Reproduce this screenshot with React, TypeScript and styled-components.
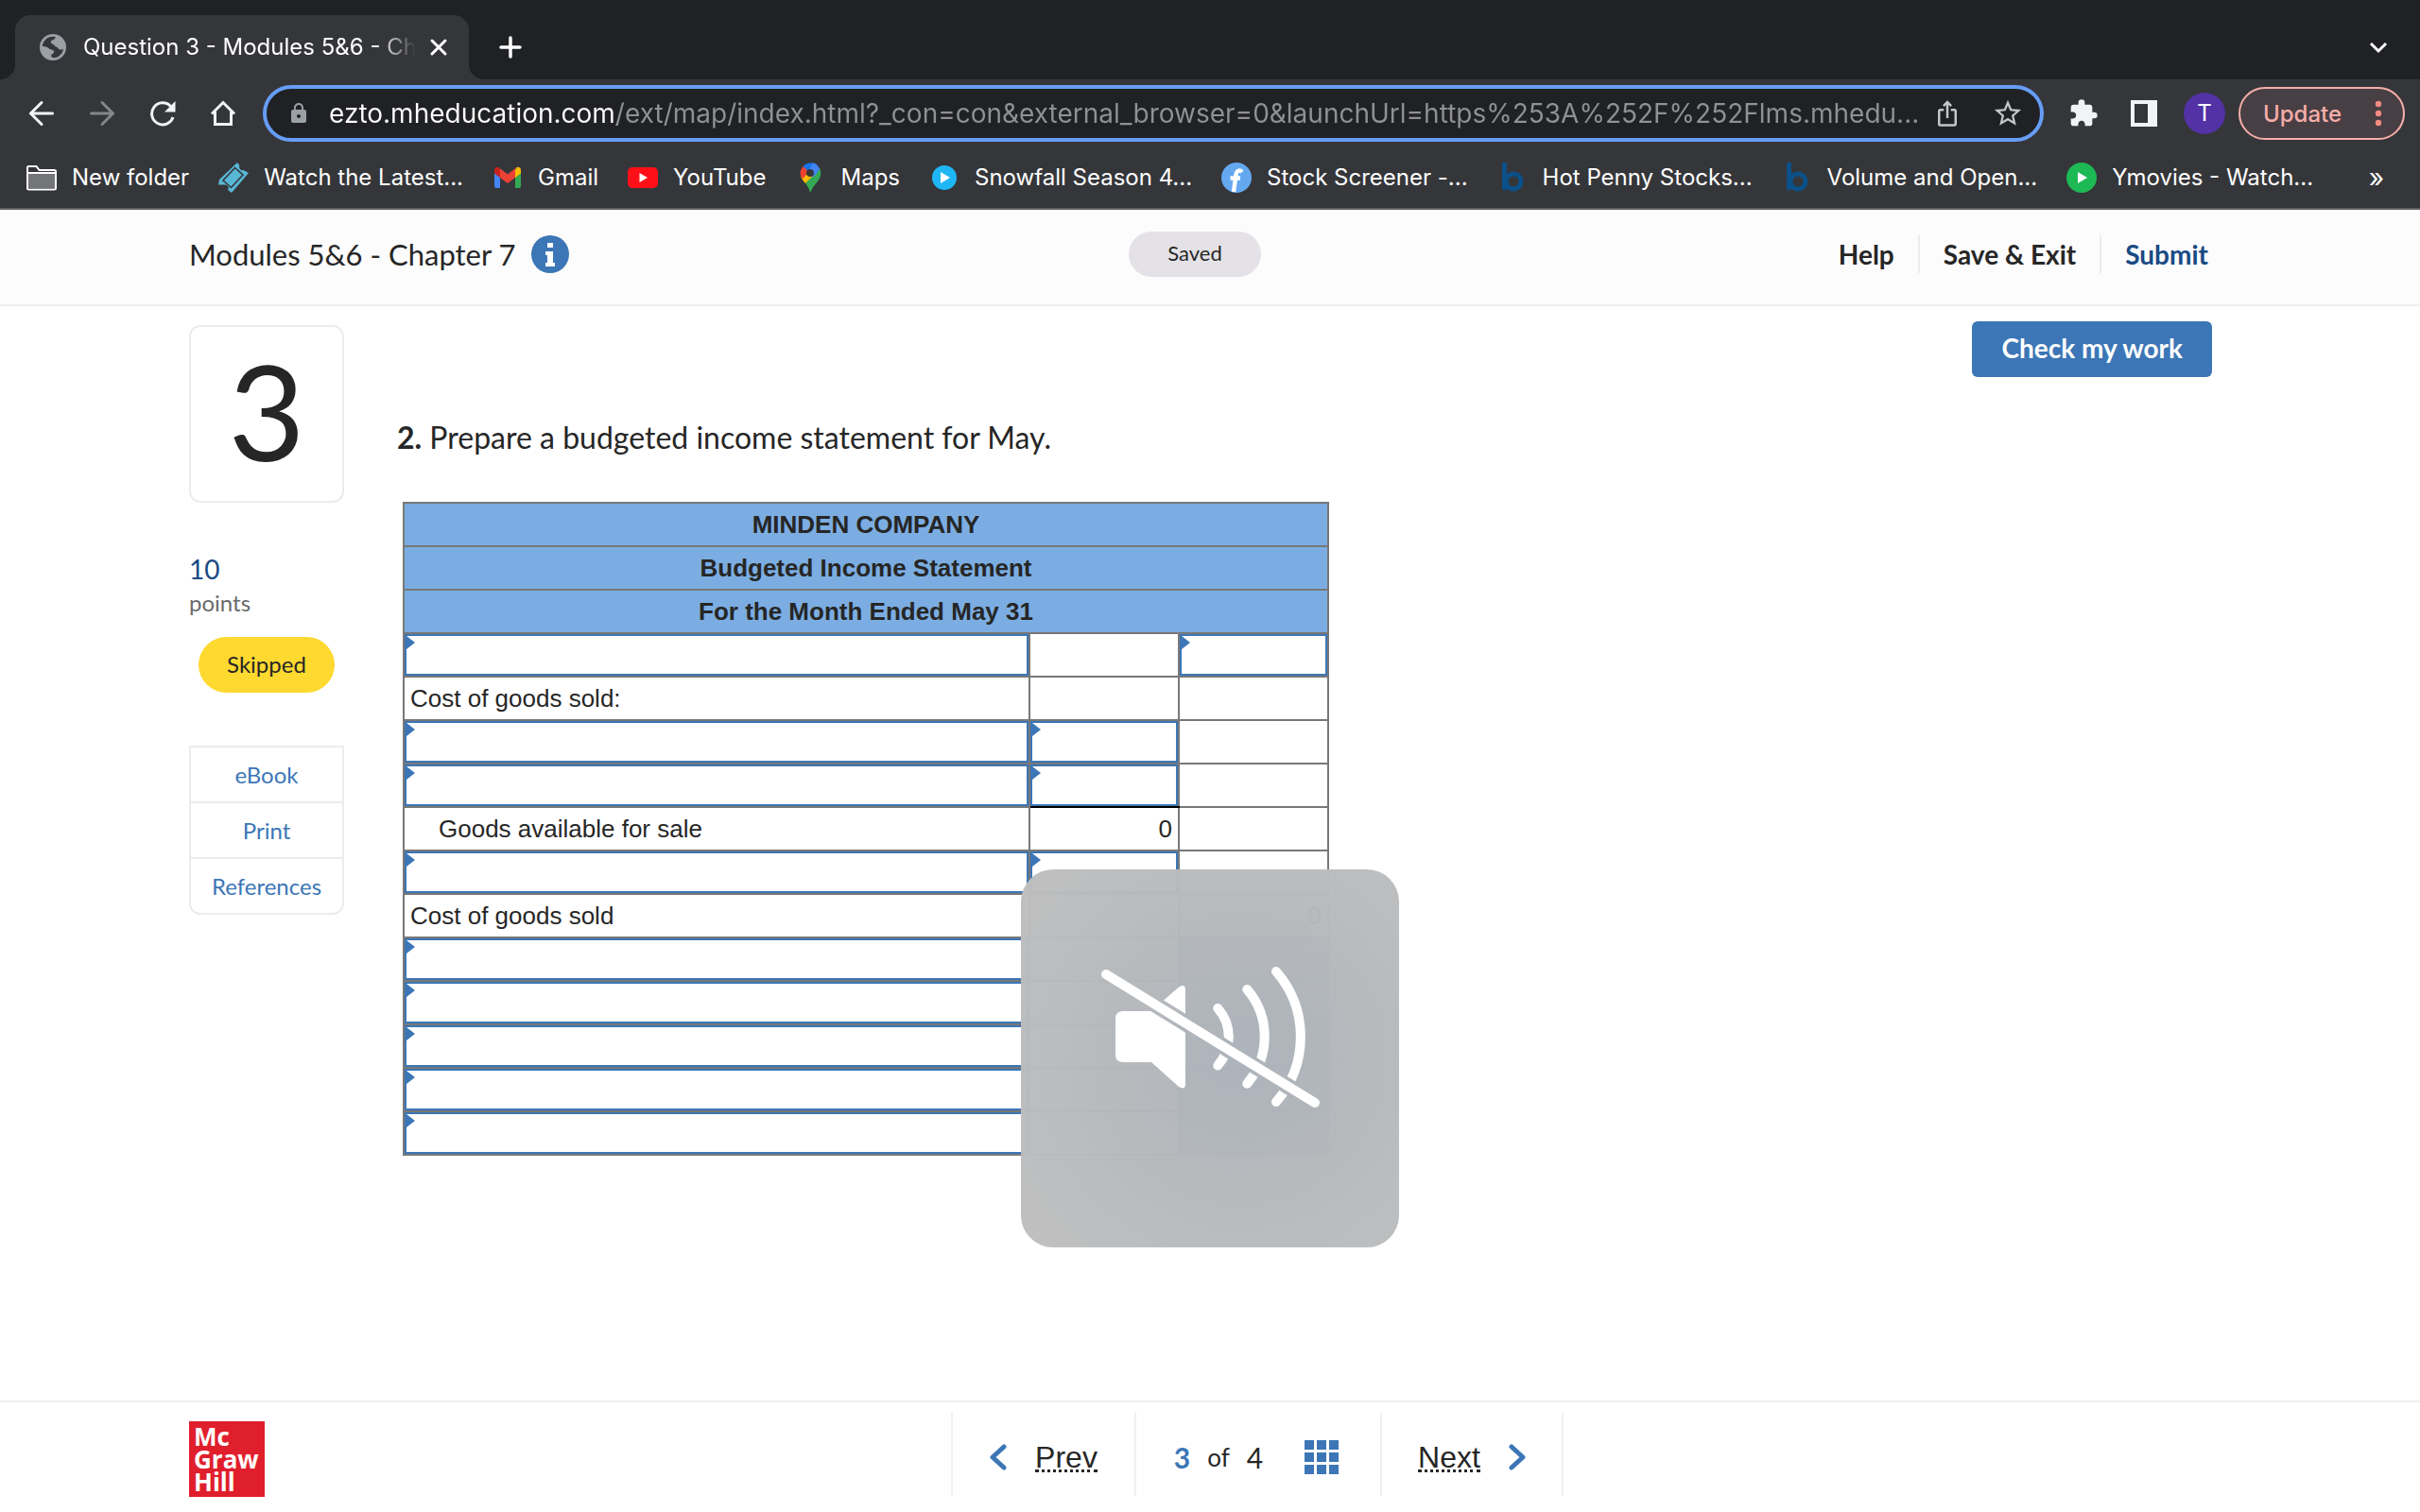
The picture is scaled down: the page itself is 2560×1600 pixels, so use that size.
import React from 'react';
import styled, { createGlobalStyle } from 'styled-components';
import { MdExtension, MdIosShare, MdLock, MdStarBorder } from 'react-icons/md';

const color = {
  strip: '#202124',
  toolbar: '#35363a',
  chromeText: '#ffffff',
  blue: '#3c76b6',
  navy: '#1a4a84',
  ink: '#262626',
  line: '#ececec',
  grid: '#787878',
};

const font = {
  chrome: '"Inter", "Roboto", sans-serif',
  page: '"Lato", "Open Sans", sans-serif',
  sheet: '"Liberation Sans", Arial, sans-serif',
};

const GlobalStyle = createGlobalStyle`
  * { box-sizing: border-box; }
  body { margin: 0; background: #fff; color: ${color.ink}; font-family: ${font.page}; }
  button, input { font: inherit; color: inherit; }
  button { border: 0; padding: 0; background: none; cursor: pointer; }
  a { text-decoration: none; color: inherit; }
  svg { display: block; }
`;

const Screen = styled.div`
  min-height: 100vh;
  display: flex;
  flex-direction: column;
`;

/* ---------- browser frame ---------- */

const Browser = styled.header`
  background: ${color.toolbar};
  color: ${color.chromeText};
  font-family: ${font.chrome};
  border-bottom: 2px solid #605f64;
`;

const TabStrip = styled.div`
  height: 84px;
  padding: 16px 32px 0 16px;
  display: flex;
  background: ${color.strip};
`;

const Tab = styled.div`
  position: relative;
  width: 480px;
  padding: 0 20px 0 26px;
  display: flex;
  align-items: center;
  background: ${color.toolbar};
  border-radius: 16px 16px 0 0;

  &::before, &::after {
    content: '';
    position: absolute;
    bottom: 0;
    width: 16px;
    height: 16px;
  }
  &::before {
    right: 100%;
    background: radial-gradient(circle at 0 0, transparent 16px, ${color.toolbar} 16px);
  }
  &::after {
    left: 100%;
    background: radial-gradient(circle at 100% 0, transparent 16px, ${color.toolbar} 16px);
  }
`;

const TabTitle = styled.span`
  flex: 1;
  margin: 0 12px 0 18px;
  overflow: hidden;
  white-space: nowrap;
  font-size: 24px;
  line-height: 32px;
  mask-image: linear-gradient(to right, #000 calc(100% - 40px), transparent);
`;

const StripButton = styled.button<{ $end?: boolean }>`
  display: flex;
  align-items: center;
  justify-content: center;
  margin-left: ${p => (p.$end ? 'auto' : '32px')};
`;

const Toolbar = styled.div`
  padding: 6px 16px 6px 12px;
  display: flex;
  align-items: center;
`;

const IconButton = styled.button<{ $dim?: boolean }>`
  width: 64px;
  height: 60px;
  display: flex;
  flex: none;
  align-items: center;
  justify-content: center;
  color: ${p => (p.$dim ? '#85868a' : '#f1f3f4')};
`;

const Omnibox = styled.div`
  flex: 1;
  height: 60px;
  margin: 0 10px;
  padding: 0 2px 0 22px;
  display: flex;
  align-items: center;
  background: ${color.strip};
  border: 4px solid #669df6;
  border-radius: 30px;
  color: #c4c6c9;
`;

const Address = styled.input`
  flex: 1;
  min-width: 0;
  height: 48px;
  margin-left: 20px;
  padding: 0;
  border: 0;
  outline: 0;
  font-size: 28px;
  line-height: 48px;
  color: transparent;
  background: linear-gradient(to right, #fff 304px, #8f9194 304px);
  background-clip: text;
  -webkit-background-clip: text;
`;

const OmniButton = styled.button`
  width: 64px;
  height: 52px;
  display: flex;
  flex: none;
  align-items: center;
  justify-content: center;
`;

const Avatar = styled.span`
  width: 44px;
  height: 44px;
  border-radius: 50%;
  background: #5232a5;
  color: #fff;
  font-size: 24px;
  line-height: 44px;
  text-align: center;
`;

const UpdateButton = styled.button`
  width: 176px;
  height: 56px;
  margin-left: 4px;
  padding: 0 22px 0 24px;
  display: flex;
  align-items: center;
  justify-content: space-between;
  border: 2px solid #f6aea9;
  border-radius: 28px;
  background: #483f44;
  color: #f6aea9;
  font-size: 24px;
  font-weight: 500;
`;

const Bookmarks = styled.nav`
  height: 64px;
  padding: 0 38px 0 28px;
  display: flex;
  align-items: center;
  gap: 31px;
`;

const Bookmark = styled.a`
  display: flex;
  align-items: center;
  gap: 16px;
  font-size: 24px;
  line-height: 32px;
  white-space: nowrap;
`;

const More = styled.button`
  margin-left: auto;
  font-size: 28px;
  line-height: 32px;
`;

/* ---------- assignment page ---------- */

const PageHeader = styled.header`
  height: 102px;
  padding: 0 232px 6px 200px;
  display: grid;
  grid-template-columns: 1fr auto 1fr;
  align-items: center;
  background: #fcfcfc;
  border-bottom: 2px solid #eeeeee;
`;

const Title = styled.h1`
  margin: 0;
  display: flex;
  align-items: center;
  gap: 16px;
  font-size: 31px;
  line-height: 40px;
  font-weight: 400;
`;

const Saved = styled.span`
  width: 140px;
  height: 48px;
  border-radius: 24px;
  background: #e4e2e6;
  font-size: 22px;
  line-height: 46px;
  text-align: center;
`;

const Actions = styled.nav`
  display: flex;
  justify-content: flex-end;
  margin-right: -33px;
`;

const Action = styled.button<{ $primary?: boolean }>`
  height: 40px;
  padding: 0 25px;
  font-size: 28px;
  line-height: 40px;
  font-weight: 700;
  color: ${p => (p.$primary ? color.navy : color.ink)};
  & + & { border-left: 2px solid ${color.line}; }
`;

const Main = styled.main`
  flex: 1;
  padding: 16px 220px 0 200px;
  display: flex;
  gap: 56px;
`;

const Sidebar = styled.aside`
  width: 164px;
  padding-top: 4px;
  flex: none;
`;

const QuestionNumber = styled.div`
  height: 188px;
  border: 2px solid ${color.line};
  border-radius: 12px;
  font-size: 140px;
  line-height: 176px;
  text-align: center;
`;

const Points = styled.div`
  margin-top: 52px;
  color: #6a6a6a;
  font-size: 24px;
  line-height: 36px;

  strong {
    display: block;
    color: ${color.navy};
    font-size: 28px;
    font-weight: 400;
  }
`;

const Status = styled.div`
  height: 59px;
  margin: 18px 10px 56px;
  border-radius: 30px;
  background: #fed930;
  font-size: 24px;
  line-height: 57px;
  text-align: center;
`;

const LinkList = styled.nav`
  display: flex;
  flex-direction: column;
  border: 2px solid ${color.line};
  border-radius: 0 0 12px 12px;
  color: ${color.blue};
  font-size: 24px;
  line-height: 57px;
  text-align: center;

  a + a { border-top: 2px solid ${color.line}; }
`;

const Content = styled.section`
  flex: 1;
`;

const CheckButton = styled.button`
  display: block;
  height: 59px;
  margin-left: auto;
  padding: 0 31px 4px;
  border-radius: 6px;
  background: ${color.blue};
  color: #fff;
  font-size: 28px;
  font-weight: 700;
`;

const Prompt = styled.p`
  margin: 40px 0 44px;
  font-size: 32px;
  line-height: 48px;
`;

const Sheet = styled.table`
  width: 980px;
  margin-left: 6px;
  table-layout: fixed;
  border-collapse: collapse;
  font-family: ${font.sheet};
  font-size: 26px;
  line-height: 44px;

  th, td {
    height: 46px;
    border: 2px solid ${color.grid};
  }
  th {
    padding: 0;
    background: #7bade2;
    font-weight: 700;
  }
`;

const Col = styled.col<{ $amount?: boolean }>`
  width: ${p => (p.$amount ? '158px' : 'auto')};
`;

const Cell = styled.td<{ $entry?: boolean; $indent?: boolean; $number?: boolean; $total?: boolean; $tinted?: boolean }>`
  position: relative;
  padding: ${p => (p.$entry ? '0' : p.$indent ? '0 6px 0 36px' : '0 6px')};
  text-align: ${p => (p.$number ? 'right' : 'left')};
  background: ${p => (p.$tinted ? '#7f9fc8' : '#fff')};
  ${p => p.$total && '&& { border-bottom-color: #000; }'}

  ${p =>
    p.$entry &&
    `&::before {
      content: '';
      position: absolute;
      top: 2px;
      left: 2px;
      border-left: 9px solid ${color.blue};
      border-top: 7px solid transparent;
      border-bottom: 7px solid transparent;
    }`}
`;

const Entry = styled.input`
  display: block;
  width: 100%;
  height: 44px;
  padding: 0 12px;
  border: 2px solid ${color.blue};
  border-radius: 0;
  outline: 0;
  background: transparent;
`;

const Footer = styled.footer`
  height: 118px;
  padding: 0 180px 0 200px;
  display: flex;
  align-items: center;
  border-top: 2px solid #f0f0f0;
`;

const Logo = styled.div`
  width: 80px;
  height: 80px;
  padding: 4px 0 0 5px;
  margin-top: 4px;
  background: #e01f2d;
  color: #fff;
  font-family: "Open Sans", sans-serif;
  font-size: 26px;
  line-height: 24px;
  font-weight: 700;
`;

const Pager = styled.nav`
  flex: 1;
  display: flex;
  justify-content: center;
  margin-bottom: 6px;
`;

const PagerPart = styled.div<{ $wide?: boolean }>`
  width: ${p => (p.$wide ? '260px' : '194px')};
  height: 88px;
  padding-top: 6px;
  display: flex;
  align-items: center;
  justify-content: center;
  gap: 18px;
  border-left: 2px solid #f0f0f0;
  font-size: 30px;
  &:last-child { border-right: 2px solid #f0f0f0; }

  strong { color: ${color.blue}; }
  small { font-size: 26px; }
  button { margin: 0 4px 0 26px; }
`;

const PageLink = styled.a`
  display: flex;
  align-items: center;
  gap: 30px;
  font-family: ${font.sheet};
  font-size: 32px;

  span {
    line-height: 26px;
    padding-top: 3px;
    border-bottom: 3px dotted ${color.ink};
  }
`;

const VolumeOverlay = styled.div`
  position: fixed;
  left: calc(50% - 200px);
  bottom: 280px;
  width: 400px;
  height: 400px;
  border-radius: 34px;
  background: radial-gradient(circle at 58% 50%, rgba(175, 180, 187, 0.975), rgba(181, 184, 187, 0.975) 45%, rgba(191, 191, 191, 0.975) 100%);
`;

/* ---------- drawings ---------- */

const Globe = () => (
  <svg width="28" height="28" viewBox="0 0 28 28">
    <circle cx="14" cy="14" r="12.6" fill="none" stroke="#9aa0a6" strokeWidth="2.8" />
    <path d="M1 13.5C5 12.5 8 13.5 10 15.5c1.6 1.6 5 .8 5.2 3.2.2 2-2.8 1.8-3 4 0 1.6 1 2.3 3 3.3C8 28 1 22 1 13.5z" fill="#9aa0a6" />
    <path d="M17 2.5c-.5 2-1.5 3.5-3.5 4C11 7 11.5 10 13.5 10.5c2 .5 2 2.5 4 3 1.8.4 2 2.5 4 3 2 .3 4-.5 5-2C27 9 23 3.5 17 2.5z" fill="#9aa0a6" />
  </svg>
);

const Cross = () => (
  <svg width="24" height="24" viewBox="0 0 24 24" stroke="#fff" strokeWidth="3" strokeLinecap="round">
    <path d="M5 5l14 14M19 5L5 19" />
  </svg>
);

const Plus = () => (
  <svg width="24" height="24" viewBox="0 0 24 24" stroke="#fff" strokeWidth="3.5" strokeLinecap="round">
    <path d="M12 2v20M2 12h20" />
  </svg>
);

const ChevronDown = () => (
  <svg width="24" height="24" viewBox="0 0 24 24" fill="none" stroke="#fff" strokeWidth="3">
    <path d="M4 8l8 8 8-8" />
  </svg>
);

const Arrow = ({ forward }: { forward?: boolean }) => (
  <svg width="28" height="28" viewBox="0 0 28 28" fill="none" stroke="currentColor" strokeWidth="3" strokeLinecap="round">
    <path d={forward ? 'M2.5 14h23M14 2.5L25.5 14 14 25.5' : 'M25.5 14h-23M14 2.5L2.5 14 14 25.5'} />
  </svg>
);

const Reload = () => (
  <svg width="28" height="28" viewBox="0 0 28 28">
    <path d="M22.5 6.5A11.5 11.5 0 1 0 25 18" fill="none" stroke="currentColor" strokeWidth="3" />
    <path d="M27.5 1v11.500H16z" fill="currentColor" />
  </svg>
);

const Home = () => (
  <svg width="28" height="28" viewBox="0 0 28 28" fill="none" stroke="currentColor" strokeWidth="3">
    <path d="M2 14.5L14 2.5l12 12M5.5 12v13.5h17V12" />
  </svg>
);

const SidePanel = () => (
  <svg width="28" height="28" viewBox="0 0 28 28">
    <path d="M0 0h28v28H0zM4 4v20h14V4z" fill="currentColor" fillRule="evenodd" />
  </svg>
);

const Dots = () => (
  <svg width="8" height="28" viewBox="0 0 8 28" fill="#f28b82">
    <circle cx="4" cy="4" r="3.2" />
    <circle cx="4" cy="14" r="3.2" />
    <circle cx="4" cy="24" r="3.2" />
  </svg>
);

const Folder = () => (
  <svg width="32" height="32" viewBox="0 0 32 32">
    <path d="M1 27V5.5q0-1.5 1.5-1.5h8l3 4h16Q31 8 31 9.500V27q0 1.5-1.5 1.5h-27Q1 28.5 1 27z" fill="none" stroke="#fff" strokeWidth="2" />
    <path d="M2 12h28v15.500H2z" fill="#747578" />
    <path d="M2 11h28" stroke="#fff" strokeWidth="2" />
  </svg>
);

const Ticket = () => (
  <svg width="32" height="32" viewBox="0 0 32 32">
    <path d="M20 0l2.500 3a3.5 3.5 0 0 0 4 5L32 11 14 32l-4-3a3.5 3.5 0 0 0-3-5.500H0L1 18z" fill="#58b7d4" />
    <path d="M17.5 5.5L26 13 13.5 26.5 5 19z" fill="none" stroke="#35363a" strokeWidth="1.6" />
  </svg>
);

const Gmail = () => (
  <svg width="32" height="32" viewBox="0 0 32 32">
    <path d="M2 8v17a2 2 0 0 0 2 2h4V14z" fill="#4285f4" />
    <path d="M30 8v17a2 2 0 0 1-2 2h-4V14z" fill="#34a853" />
    <path d="M24 8v8l6-4.5V8c0-3-3-4-5-2.5z" fill="#fbbc04" />
    <path d="M2 8v3.5L8 16V8L7 5.500C5 4 2 5 2 8z" fill="#c5221f" />
    <path d="M7 5.5l9 7 9-7-1 1.500v9l-8 6-8-6V7z" fill="#ea4335" />
  </svg>
);

const YouTube = () => (
  <svg width="32" height="32" viewBox="0 0 32 32">
    <rect x="0" y="5" width="32" height="22" rx="5" fill="#ff0f18" />
    <path d="M12.5 11l8.500 5-8.500 5z" fill="#fff" />
  </svg>
);

const MapPin = () => (
  <svg width="32" height="32" viewBox="0 0 32 32">
    <path d="M16 32c-1-4.5-3-7.5-5-10l11-13 4-3c2.5 5 1 10-2 14-3.5 4.5-6 7-8 12z" fill="#34a853" />
    <path d="M11 22c-2-2.5-4-4.5-5-8l14-8 2 5z" fill="#fbbc04" />
    <path d="M6 14c-1-4 0-7 2.5-10L15 9l-6.5 8C7 16 6.5 15.5 6 14z" fill="#ea4335" />
    <path d="M8.5 4C11.5 0 19-1 23 2l-8 8z" fill="#1a73e8" />
    <path d="M19 .5c4 1 6.5 4 7 7l-6.5 8L14 9.500z" fill="#4285f4" />
    <circle cx="16" cy="11" r="4" fill="#35363a" />
  </svg>
);

const PlayDot = ({ fill, r }: { fill: string; r: number }) => (
  <svg width="32" height="32" viewBox="0 0 32 32">
    <circle cx="16" cy="16" r={r} fill={fill} />
    <path d="M12 10l10 6-10 6z" fill="#fff" />
  </svg>
);

const Finviz = () => (
  <svg width="32" height="32" viewBox="0 0 32 32">
    <circle cx="16" cy="16" r="16" fill="#64a8f0" />
    <path d="M22 10c-3-3-6-1-6.5 3L13 31M9.5 16.500H20" fill="none" stroke="#fff" strokeWidth="4.5" />
  </svg>
);

const Barchart = () => (
  <svg width="32" height="32" viewBox="0 0 32 32" fill="none" stroke="#0b5088" strokeWidth="5">
    <path d="M7.5 0v29" />
    <circle cx="17" cy="20" r="8" />
  </svg>
);

const Info = () => (
  <svg width="40" height="40" viewBox="0 0 40 40">
    <circle cx="20" cy="20" r="20" fill={color.blue} />
    <path d="M17 8h6v5h-6zM15 17h8v12h2v4H15v-4h2v-8h-2z" fill="#fff" />
  </svg>
);

const Chevron = ({ right }: { right?: boolean }) => (
  <svg width="18" height="28" viewBox="0 0 18 28" fill="none" stroke={color.blue} strokeWidth="5" strokeLinecap="round" strokeLinejoin="round">
    <path d={right ? 'M3 3l12 11L3 25' : 'M15 3L3 14l12 11'} />
  </svg>
);

const Tiles = () => (
  <svg width="36" height="36" viewBox="0 0 36 36" fill={color.blue}>
    {[0, 13, 26].map(y => [0, 13, 26].map(x => <rect key={`${x}-${y}`} x={x} y={y} width="10" height="10" />))}
  </svg>
);

const Muted = () => (
  <svg width="400" height="400" viewBox="0 0 400 400" role="img" aria-label="Muted">
    <mask id="slash-gap">
      <rect width="400" height="400" fill="#fff" />
      <path d="M90 111l221 136" stroke="#000" strokeWidth="17" />
    </mask>
    <g mask="url(#slash-gap)">
      <path d="M100 158q0-8 8-8h30l29-25.5q7-4 7 3v99.5q0 7-7 3L138 204h-30q-8 0-8-8z" fill="#fff" />
      <g fill="none" stroke="#fff" strokeWidth="10" strokeLinecap="round">
        <path d="M208.3 147A45.6 45.6 0 0 1 208.3 207.5" />
        <path d="M239.3 127A76.6 76.6 0 0 1 239.3 226.7" />
        <path d="M270 108A105 105 0 0 1 270 246" />
      </g>
    </g>
    <path d="M90 111l221 136" stroke="#fff" strokeWidth="10" strokeLinecap="round" />
  </svg>
);

/* ---------- data ---------- */

const bookmarks: { label: string; icon: React.ReactNode }[] = [
  { label: 'New folder', icon: <Folder /> },
  { label: 'Watch the Latest...', icon: <Ticket /> },
  { label: 'Gmail', icon: <Gmail /> },
  { label: 'YouTube', icon: <YouTube /> },
  { label: 'Maps', icon: <MapPin /> },
  { label: 'Snowfall Season 4...', icon: <PlayDot fill="#1fb6f5" r={13} /> },
  { label: 'Stock Screener -...', icon: <Finviz /> },
  { label: 'Hot Penny Stocks...', icon: <Barchart /> },
  { label: 'Volume and Open...', icon: <Barchart /> },
  { label: 'Ymovies - Watch...', icon: <PlayDot fill="#1db954" r={16} /> },
];

type Value = 'entry' | 'total' | string | undefined;
type Row = { label?: string; indent?: boolean; amount?: Value; sum?: Value; tinted?: boolean };

const rows: Row[] = [
  { sum: 'entry' },
  { label: 'Cost of goods sold:' },
  { amount: 'entry' },
  { amount: 'total' },
  { label: 'Goods available for sale', indent: true, amount: '0' },
  { amount: 'entry' },
  { label: 'Cost of goods sold', sum: '0' },
  { sum: 'entry', tinted: true },
  { sum: 'entry', tinted: true },
  { sum: 'entry', tinted: true },
  { sum: 'entry', tinted: true },
  { sum: 'entry', tinted: true },
];

const ValueCell = ({ value, name, tinted }: { value: Value; name: string; tinted?: boolean }) =>
  value === 'entry' || value === 'total' ? (
    <Cell $entry $total={value === 'total'} $tinted={tinted}>
      <Entry aria-label={name} />
    </Cell>
  ) : (
    <Cell $number>{value}</Cell>
  );

export default function App() {
  return (
    <Screen>
      <GlobalStyle />
      <Browser>
        <TabStrip>
          <Tab>
            <Globe />
            <TabTitle>Question 3 - Modules 5&amp;6 - Chapter 7</TabTitle>
            <button aria-label="Close tab"><Cross /></button>
          </Tab>
          <StripButton aria-label="New tab"><Plus /></StripButton>
          <StripButton $end aria-label="Search tabs"><ChevronDown /></StripButton>
        </TabStrip>
        <Toolbar>
          <IconButton aria-label="Back"><Arrow /></IconButton>
          <IconButton $dim aria-label="Forward"><Arrow forward /></IconButton>
          <IconButton aria-label="Reload"><Reload /></IconButton>
          <IconButton aria-label="Home"><Home /></IconButton>
          <Omnibox>
            <MdLock size={24} color="#9aa0a6" />
            <Address
              aria-label="Address"
              defaultValue="ezto.mheducation.com/ext/map/index.html?_con=con&external_browser=0&launchUrl=https%253A%252F%252Flms.mhedu..."
            />
            <OmniButton aria-label="Share"><MdIosShare size={30} /></OmniButton>
            <OmniButton aria-label="Bookmark this tab"><MdStarBorder size={34} /></OmniButton>
          </Omnibox>
          <IconButton aria-label="Extensions"><MdExtension size={32} /></IconButton>
          <IconButton aria-label="Side panel"><SidePanel /></IconButton>
          <IconButton aria-label="Profile"><Avatar>T</Avatar></IconButton>
          <UpdateButton>Update <Dots /></UpdateButton>
        </Toolbar>
        <Bookmarks aria-label="Bookmarks">
          {bookmarks.map(b => (
            <Bookmark key={b.label} href="#">{b.icon}{b.label}</Bookmark>
          ))}
          <More aria-label="More bookmarks">»</More>
        </Bookmarks>
      </Browser>

      <PageHeader>
        <Title>Modules 5&amp;6 - Chapter 7 <Info /></Title>
        <Saved>Saved</Saved>
        <Actions>
          <Action>Help</Action>
          <Action>Save &amp; Exit</Action>
          <Action $primary>Submit</Action>
        </Actions>
      </PageHeader>

      <Main>
        <Sidebar>
          <QuestionNumber>3</QuestionNumber>
          <Points><strong>10</strong>points</Points>
          <Status>Skipped</Status>
          <LinkList>
            <a href="#">eBook</a>
            <a href="#">Print</a>
            <a href="#">References</a>
          </LinkList>
        </Sidebar>
        <Content>
          <CheckButton>Check my work</CheckButton>
          <Prompt><b>2.</b> Prepare a budgeted income statement for May.</Prompt>
          <Sheet>
            <colgroup><Col /><Col $amount /><Col $amount /></colgroup>
            <thead>
              <tr><th colSpan={3}>MINDEN COMPANY</th></tr>
              <tr><th colSpan={3}>Budgeted Income Statement</th></tr>
              <tr><th colSpan={3}>For the Month Ended May 31</th></tr>
            </thead>
            <tbody>
              {rows.map((row, i) => (
                <tr key={i}>
                  {row.label ? (
                    <Cell $indent={row.indent}>{row.label}</Cell>
                  ) : (
                    <Cell $entry><Entry aria-label={`Line ${i + 1} item`} /></Cell>
                  )}
                  <ValueCell value={row.amount} name={`Line ${i + 1} amount`} />
                  <ValueCell value={row.sum} name={`Line ${i + 1} total`} tinted={row.tinted} />
                </tr>
              ))}
            </tbody>
          </Sheet>
        </Content>
      </Main>

      <Footer>
        <Logo>Mc<br />Graw<br />Hill</Logo>
        <Pager aria-label="Questions">
          <PagerPart>
            <PageLink href="#"><Chevron /><span>Prev</span></PageLink>
          </PagerPart>
          <PagerPart $wide>
            <strong>3</strong><small>of</small>4
            <button aria-label="All questions"><Tiles /></button>
          </PagerPart>
          <PagerPart>
            <PageLink href="#"><span>Next</span><Chevron right /></PageLink>
          </PagerPart>
        </Pager>
      </Footer>

      <VolumeOverlay><Muted /></VolumeOverlay>
    </Screen>
  );
}
